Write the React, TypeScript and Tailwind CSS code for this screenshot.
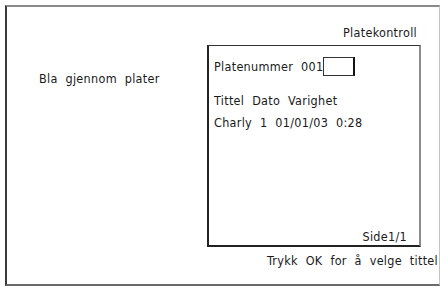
export default function App() {
  return (
    <div className="w-[442px] h-[287px] bg-white overflow-hidden font-['DejaVu_Sans_Condensed','DejaVu_Sans',sans-serif] [font-stretch:condensed] text-[12.5px] text-[#1a1a1a] tracking-[0.3px] [word-spacing:4px]">
      {/* Outer frame */}
      <div className="ml-[5px] mt-[5px] w-[435px] h-[281px] border-t-2 border-t-[#8a8a8a] border-l-2 border-l-[#3a3a3a] border-b-2 border-b-[#6a6a6a] border-r border-r-[#c4c4c4] overflow-hidden flex flex-col">
        <div className="mt-[18px] h-[16px] leading-[16px] text-right pr-[22px]">Platekontroll</div>

        <div className="mt-[4px] flex">
          <div className="w-[200px] pl-[32px] pt-[26px] leading-[16px]">Bla gjennom plater</div>

          {/* Disc panel */}
          <div className="w-[214px] h-[202px] border-l-2 border-l-[#222] border-t border-t-[#333] border-b-2 border-b-[#222] border-r-2 border-r-[#8c8c8c] flex flex-col pl-[5px] pr-[12px]">
            <div className="mt-[11px] h-[19px] flex items-center">
              <span className="leading-[16px]">Platenummer 001</span>
              <div className="w-[32px] h-[19px] border border-[#333] border-r-2 border-r-[#111]" />
            </div>
            <div className="mt-[17px] leading-[16px] whitespace-nowrap">Tittel Dato Varighet</div>
            <div className="mt-[6px] leading-[16px] whitespace-nowrap">Charly 1 01/01/03 0:28</div>
            <div className="mt-auto mb-[1px] leading-[14px] text-right">Side1/1</div>
          </div>
        </div>

        <div className="mt-[6px] pl-[260px] leading-[16px] whitespace-nowrap">Trykk OK for å velge tittel</div>
      </div>
    </div>
  );
}
